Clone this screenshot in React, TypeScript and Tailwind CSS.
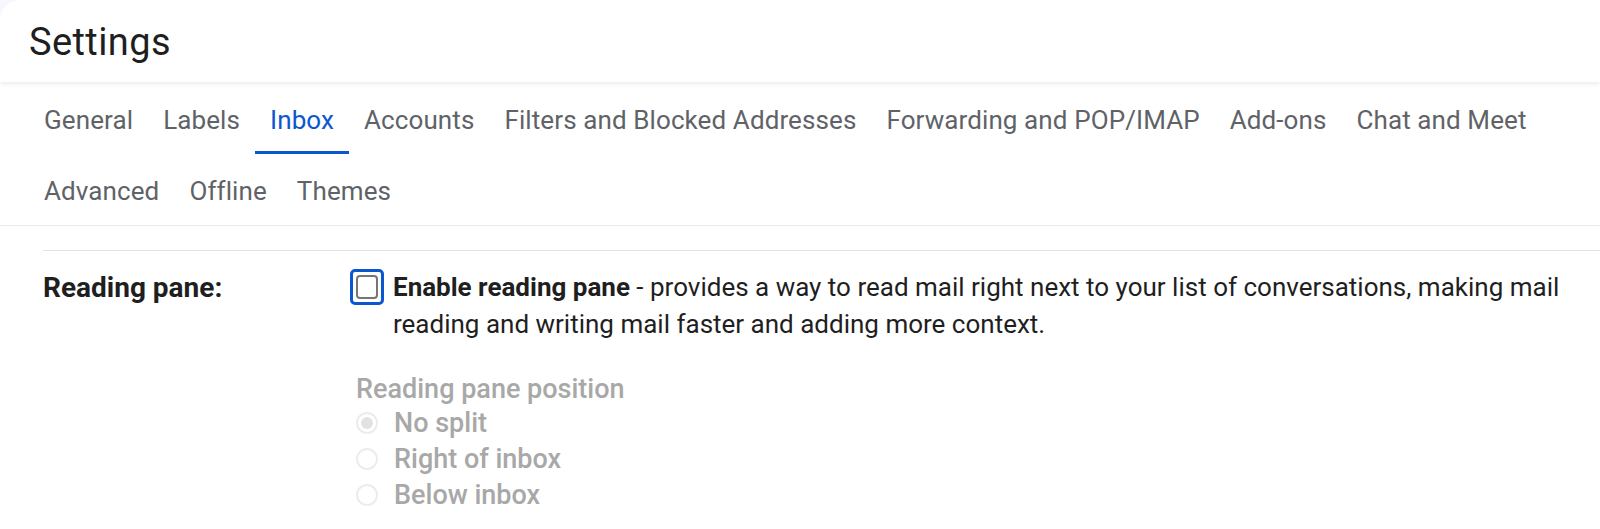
import { type ReactNode } from "react";

const tabs = [
  "General",
  "Labels",
  "Inbox",
  "Accounts",
  "Filters and Blocked Addresses",
  "Forwarding and POP/IMAP",
  "Add-ons",
  "Chat and Meet",
  "Advanced",
  "Offline",
  "Themes",
];

function Tab({ label, active }: { label: string; active?: boolean }) {
  return (
    <button
      type="button"
      className={
        active
          ? "relative flex h-[71px] items-center px-[15px] pt-[4px] text-[26px] tracking-[0.1px] text-[#0b57d0]"
          : "relative flex h-[71px] items-center px-[15px] pt-[4px] text-[26px] tracking-[0.1px] text-[#5f6368]"
      }
    >
      {label}
      {active && <span className="absolute bottom-0 left-0 right-0 h-[3px] bg-[#0b57d0]" />}
    </button>
  );
}

function Radio({ checked, children }: { checked?: boolean; children: ReactNode }) {
  return (
    <div className="flex h-[36px] items-center gap-[16px]">
      <span className="grid h-[22px] w-[22px] place-items-center rounded-full border-2 border-[#ececec]">
        {checked && <span className="h-[12px] w-[12px] rounded-full bg-[#e2e2e2]" />}
      </span>
      <span className="text-[27px] font-medium">{children}</span>
    </div>
  );
}

export default function App() {
  return (
    <div className="h-[529px] w-full bg-[#f6f8fc] font-['Roboto',sans-serif]">
      <div className="h-full overflow-hidden rounded-tl-[20px] bg-white">
        <header className="relative z-10 flex h-[82px] items-center pl-[29px] pt-[2px] shadow-[0_2px_4px_rgba(60,64,67,0.1)]">
          <h1 className="text-[38px] tracking-[0.4px] text-[#1f1f1f]">Settings</h1>
        </header>

        <nav className="mt-px flex flex-wrap border-b border-[#ebebeb] pl-[29px]">
          {tabs.map((t) => (
            <Tab key={t} label={t} active={t === "Inbox"} />
          ))}
        </nav>

        <div className="pl-[43px] pt-[24px]">
          <div className="border-t border-[#e3e3e3]" />
          <div className="flex pt-[18px] text-[#1f1f1f]">
            <div className="w-[307px] shrink-0 text-[28px] font-bold leading-[37px]">Reading pane:</div>
            <div>
              <label className="flex gap-[9px]">
                <span className="grid h-[36px] w-[34px] shrink-0 place-items-center rounded-[5px] border-[3px] border-[#0b57d0]">
                  <span className="h-[24px] w-[22px] rounded-[4px] border-2 border-[#747775]" />
                </span>
                <span className="w-[1175px] text-[26px] leading-[37px]">
                  <b className="font-bold">Enable reading pane</b> - provides a way to read mail right next to your list
                  of conversations, making mail reading and writing mail faster and adding more context.
                </span>
              </label>

              <div className="mt-[30px] pl-[6px] text-[#a8a8a8]">
                <div className="text-[27px] font-medium leading-[32px]">Reading pane position</div>
                <Radio checked>No split</Radio>
                <Radio>Right of inbox</Radio>
                <Radio>Below inbox</Radio>
              </div>
            </div>
          </div>
        </div>
      </div>
    </div>
  );
}
